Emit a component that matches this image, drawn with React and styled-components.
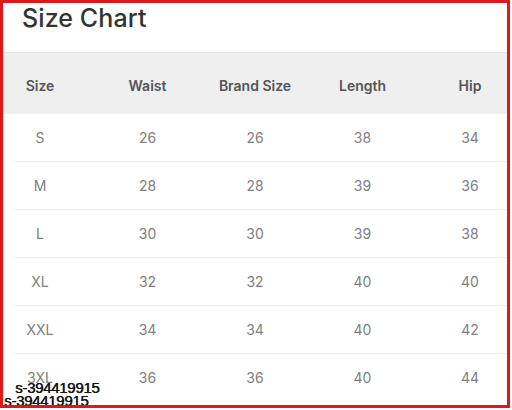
import React from "react";
import styled, { createGlobalStyle } from "styled-components";

const Global = createGlobalStyle`
  html, body { margin: 0; padding: 0; background: #ffffff; }
  body { font-family: Inter, "Noto Sans", Arial, sans-serif; }
`;

const Frame = styled.div`
  position: relative;
  box-sizing: border-box;
  width: 510px;
  height: 408px;
  border: 3px solid #e1161a;
  background: #ffffff;
  overflow: hidden;
  display: flex;
  flex-direction: column;
`;

const Title = styled.h1`
  margin: 0;
  padding: 0 0 0 19px;
  height: 49px;
  font-size: 25px;
  line-height: 30px;
  font-weight: 500;
  color: #333333;
  letter-spacing: 0.1px;
`;

const Row = styled.div`
  display: grid;
  grid-template-columns: repeat(5, 107.5px);
  justify-content: center;
  align-items: center;
  justify-items: center;
  flex: none;
  height: ${(p) => (p.$head ? "61px" : "47px")};
  background: ${(p) => (p.$head ? "#efefef" : "transparent")};
  border-top: ${(p) => (p.$head ? "1px solid #e6e6e6" : "none")};
`;

const Cell = styled.span`
  font-size: 14px;
  white-space: nowrap;
  font-weight: ${(p) => (p.$head ? 600 : 400)};
  color: ${(p) => (p.$head ? "#555555" : "#808080")};
  padding-top: ${(p) => (p.$head ? "4px" : "0")};
`;

const Divider = styled.div`
  flex: none;
  height: 1px;
  margin-left: 11px;
  background: #f0f0f0;
`;

const Watermark = styled.span`
  position: absolute;
  left: ${(p) => p.$x}px;
  top: ${(p) => p.$y}px;
  font-family: "Liberation Sans", Arial, sans-serif;
  font-size: 15px;
  letter-spacing: -0.3px;
  color: #141414;
  text-shadow: 0.5px 0 0 #141414;
  line-height: 1;
`;

const headers = ["Size", "Waist", "Brand Size", "Length", "Hip"];
const rows = [
  ["S", "26", "26", "38", "34"],
  ["M", "28", "28", "39", "36"],
  ["L", "30", "30", "39", "38"],
  ["XL", "32", "32", "40", "40"],
  ["XXL", "34", "34", "40", "42"],
  ["3XL", "36", "36", "40", "44"],
];

export default function App() {
  return (
    <>
      <Global />
      <Frame>
        <Title>Size Chart</Title>
        <Row $head>
          {headers.map((h) => (
            <Cell key={h} $head>
              {h}
            </Cell>
          ))}
        </Row>
        {rows.map((r, i) => (
          <React.Fragment key={r[0]}>
            {i > 0 && <Divider />}
            <Row>
              {r.map((c, j) => (
                <Cell key={j}>{c}</Cell>
              ))}
            </Row>
          </React.Fragment>
        ))}
        <Watermark $x={12} $y={377}>s-394419915</Watermark>
        <Watermark $x={1} $y={390}>s-394419915</Watermark>
      </Frame>
    </>
  );
}
